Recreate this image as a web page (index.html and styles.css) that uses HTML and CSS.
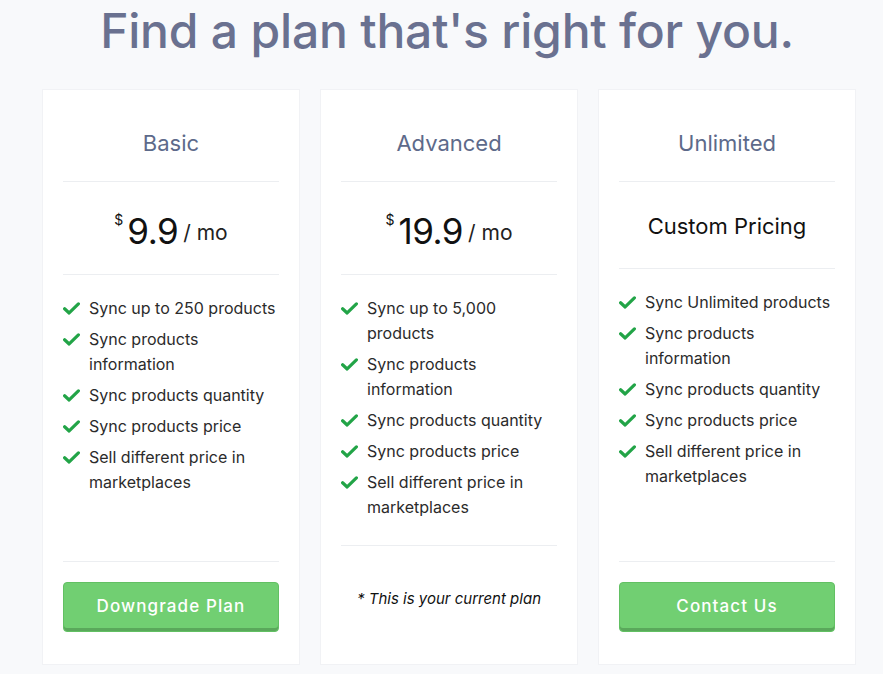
FILE: index.html
```html
<!DOCTYPE html>
<html>
<head>
<meta charset="utf-8">
<link rel="stylesheet" href="styles.css">
</head>
<body>
<div class="page">
  <h1 class="headline">Find a plan that's right for you.</h1>
  <div class="plans">
    <div class="card">
      <div class="card-head"><h2 class="plan-name">Basic</h2></div>
      <div class="price"><span class="cur">$</span><span class="amount">9.9</span><span class="per">/ mo</span></div>
      <ul class="features">
        <li><svg class="check" viewBox="0 0 16 12"><path d="M1.5 6.2 L5.8 10.2 L14.5 1.6" /></svg><span>Sync up to 250 products</span></li>
        <li><svg class="check" viewBox="0 0 16 12"><path d="M1.5 6.2 L5.8 10.2 L14.5 1.6" /></svg><span>Sync products information</span></li>
        <li><svg class="check" viewBox="0 0 16 12"><path d="M1.5 6.2 L5.8 10.2 L14.5 1.6" /></svg><span>Sync products quantity</span></li>
        <li><svg class="check" viewBox="0 0 16 12"><path d="M1.5 6.2 L5.8 10.2 L14.5 1.6" /></svg><span>Sync products price</span></li>
        <li><svg class="check" viewBox="0 0 16 12"><path d="M1.5 6.2 L5.8 10.2 L14.5 1.6" /></svg><span>Sell different price in marketplaces</span></li>
      </ul>
      <div class="card-foot"><button class="btn">Downgrade Plan</button></div>
    </div>
    <div class="card">
      <div class="card-head"><h2 class="plan-name">Advanced</h2></div>
      <div class="price"><span class="cur">$</span><span class="amount">19.9</span><span class="per">/ mo</span></div>
      <ul class="features">
        <li><svg class="check" viewBox="0 0 16 12"><path d="M1.5 6.2 L5.8 10.2 L14.5 1.6" /></svg><span>Sync up to 5,000 products</span></li>
        <li><svg class="check" viewBox="0 0 16 12"><path d="M1.5 6.2 L5.8 10.2 L14.5 1.6" /></svg><span>Sync products information</span></li>
        <li><svg class="check" viewBox="0 0 16 12"><path d="M1.5 6.2 L5.8 10.2 L14.5 1.6" /></svg><span>Sync products quantity</span></li>
        <li><svg class="check" viewBox="0 0 16 12"><path d="M1.5 6.2 L5.8 10.2 L14.5 1.6" /></svg><span>Sync products price</span></li>
        <li><svg class="check" viewBox="0 0 16 12"><path d="M1.5 6.2 L5.8 10.2 L14.5 1.6" /></svg><span>Sell different price in marketplaces</span></li>
      </ul>
      <div class="card-foot current"><p class="note">* This is your current plan</p></div>
    </div>
    <div class="card">
      <div class="card-head"><h2 class="plan-name">Unlimited</h2></div>
      <div class="price custom"><span class="custom-text">Custom Pricing</span></div>
      <ul class="features">
        <li><svg class="check" viewBox="0 0 16 12"><path d="M1.5 6.2 L5.8 10.2 L14.5 1.6" /></svg><span>Sync Unlimited products</span></li>
        <li><svg class="check" viewBox="0 0 16 12"><path d="M1.5 6.2 L5.8 10.2 L14.5 1.6" /></svg><span>Sync products information</span></li>
        <li><svg class="check" viewBox="0 0 16 12"><path d="M1.5 6.2 L5.8 10.2 L14.5 1.6" /></svg><span>Sync products quantity</span></li>
        <li><svg class="check" viewBox="0 0 16 12"><path d="M1.5 6.2 L5.8 10.2 L14.5 1.6" /></svg><span>Sync products price</span></li>
        <li><svg class="check" viewBox="0 0 16 12"><path d="M1.5 6.2 L5.8 10.2 L14.5 1.6" /></svg><span>Sell different price in marketplaces</span></li>
      </ul>
      <div class="card-foot"><button class="btn">Contact Us</button></div>
    </div>
  </div>
</div>
</body>
</html>
```
FILE: styles.css
```css
* { box-sizing: border-box; }
html, body { margin: 0; padding: 0; }
body {
  background: #f8f9fb;
  font-family: Inter, "Noto Sans", "Liberation Sans", sans-serif;
  color: #222;
}
.page {
  width: 883px;
  height: 674px;
  overflow: hidden;
}
.headline {
  margin: 3px 0 31px;
  padding-left: 11px;
  text-align: center;
  font-size: 48px;
  line-height: 55px;
  font-weight: 500;
  color: #6a7190;
  letter-spacing: -0.2px;
}
.plans {
  display: flex;
  gap: 20px;
  padding-left: 42px;
  align-items: stretch;
}
.card {
  width: 258px;
  background: #fff;
  border: 1px solid #f1f2f5;
  display: flex;
  flex-direction: column;
}
.card-head {
  margin: 0 20px;
  padding: 39px 0 24px;
  border-bottom: 1px solid #eceef1;
  text-align: center;
}
.plan-name {
  margin: 0;
  font-size: 22px;
  line-height: 28px;
  font-weight: 400;
  color: #5d6a8a;
}
.price {
  margin: 0 20px;
  padding: 29px 0 23px;
  border-bottom: 1px solid #eceef1;
  display: flex;
  justify-content: center;
  align-items: flex-start;
  height: 93px;
  color: #111;
}
.cur {
  font-size: 14px;
  line-height: 14px;
  margin-top: 2px;
  margin-right: 4px;
}
.amount {
  font-size: 35px;
  line-height: 40px;
  letter-spacing: -0.5px;
}
.per {
  font-size: 21px;
  line-height: 24px;
  margin-top: 10px;
  margin-left: 5px;
  color: #222;
}
.price.custom {
  height: 87px;
  padding-top: 29px;
  padding-bottom: 0;
}
.custom-text {
  font-size: 22px;
  line-height: 30px;
  color: #111;
}
.features {
  list-style: none;
  margin: 0 20px;
  padding: 21px 0 25px;
  flex: 1;
}
.features li {
  display: flex;
  align-items: flex-start;
  font-size: 16px;
  line-height: 25px;
  color: #2b2b2b;
  margin-bottom: 6px;
}
.features li:last-child { margin-bottom: 0; }
.check {
  width: 17px;
  height: 13px;
  flex: none;
  margin-top: 6px;
  margin-right: 9px;
  fill: none;
  stroke: #22a447;
  stroke-width: 3;
  stroke-linecap: round;
  stroke-linejoin: round;
}
.card-foot {
  margin: 0 20px;
  border-top: 1px solid #eceef1;
  padding: 20px 0 32px;
}
.card-foot.current {
  padding: 43px 0 55px;
}
.btn {
  display: block;
  width: 100%;
  height: 50px;
  border: 1px solid #62c063;
  border-radius: 4px;
  background: #71cf72;
  box-shadow: inset 0 -3px 0 #5aa85b;
  color: #fff;
  font-family: Inter, "Noto Sans", "Liberation Sans", sans-serif;
  font-size: 17px;
  font-weight: 500;
  letter-spacing: 1.1px;
  padding: 0 0 3px;
}
.note {
  margin: 0;
  text-align: center;
  font-size: 15px;
  line-height: 20px;
  font-style: italic;
  color: #111;
}
```
